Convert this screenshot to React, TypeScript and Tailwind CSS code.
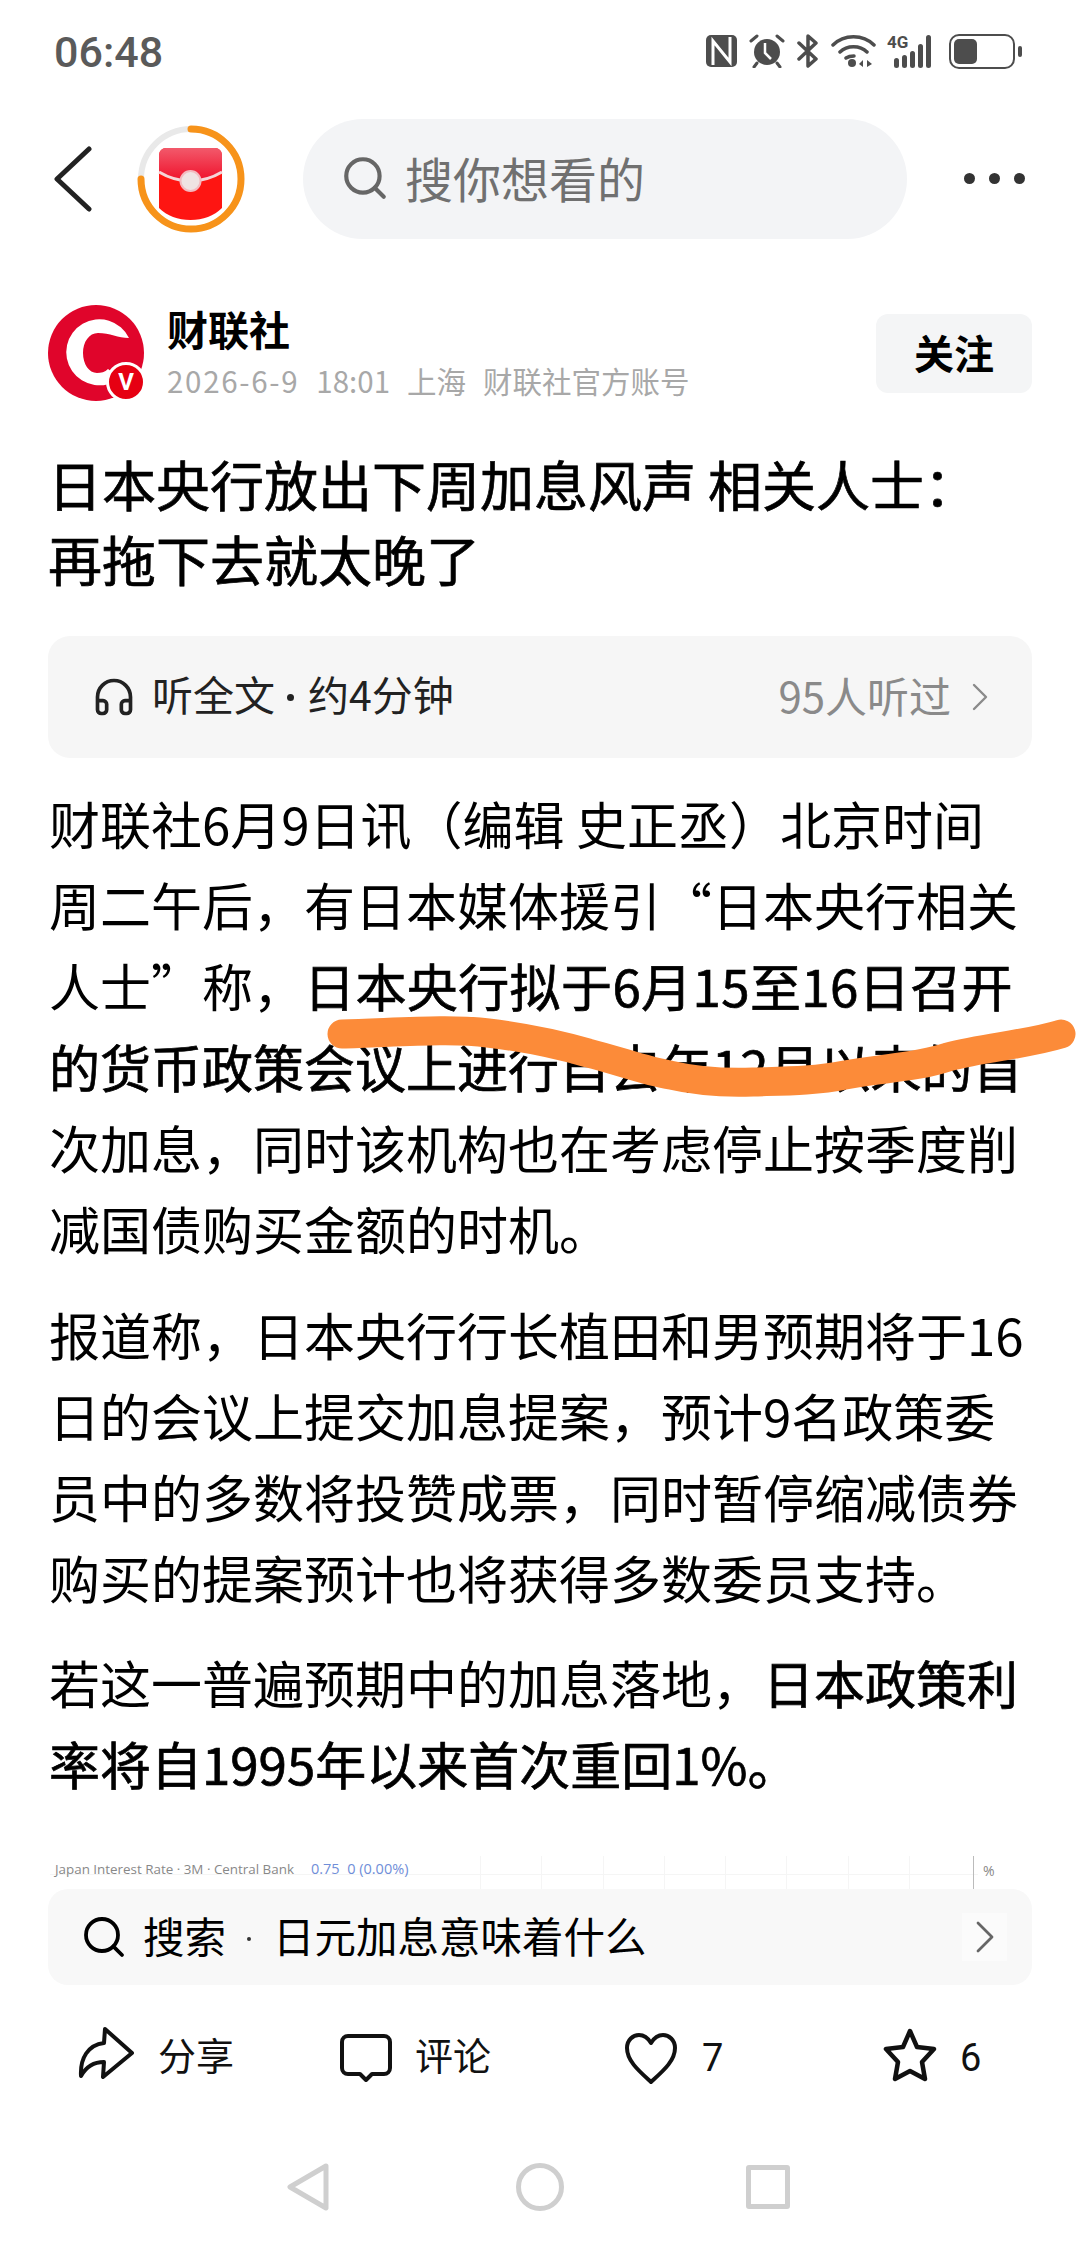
import { ChevronRight, Headphones, Search } from "lucide-react";

const cjk = "font-['Noto_Sans_CJK_SC','Roboto',sans-serif]";
const semi = "[-webkit-text-stroke:0.7px_#000]";

function StatusIcons() {
  return (
    <div className="flex items-center text-[#4d4d4d]">
      {/* nfc */}
      <svg width="31" height="32" viewBox="0 0 31 32">
        <rect x="0" y="0" width="31" height="32" rx="5" fill="#4d4d4d" />
        <path d="M7 30V6l17 21V2" fill="none" stroke="#fff" strokeWidth="3" />
      </svg>
      {/* alarm */}
      <svg width="36" height="34" viewBox="0 0 36 34" className="ml-[12px]">
        <circle cx="18" cy="18" r="13" fill="#4d4d4d" />
        <path d="M16 9v10l6 6" fill="none" stroke="#fff" strokeWidth="2.5" />
        <path d="M2 7l6-5M34 7l-6-5M8 29l-3 4M28 29l3 4" stroke="#4d4d4d" strokeWidth="3" strokeLinecap="round" />
      </svg>
      {/* bluetooth */}
      <svg width="22" height="34" viewBox="0 0 22 34" className="ml-[12px]">
        <path d="M2 9l17 16-8 7V2l8 7L2 25" fill="none" stroke="#4d4d4d" strokeWidth="3.5" strokeLinejoin="round" strokeLinecap="round" />
      </svg>
      {/* wifi */}
      <svg width="45" height="34" viewBox="0 0 45 34" className="ml-[12px]">
        <path d="M2 11c11-11 30-11 41 0M9 18c7-7 20-7 27 0M15 24c3-2 6-2 8-2" fill="none" stroke="#4d4d4d" strokeWidth="3.5" strokeLinecap="round" />
        <circle cx="21" cy="29" r="4" fill="#4d4d4d" />
        <path d="M28 30l4-4v7zM36 26v7l5-3z" fill="#4d4d4d" />
      </svg>
      {/* 4g + bars */}
      <div className="relative ml-[11px] w-[50px] h-[34px]">
        <span className="absolute left-0 top-[-2px] text-[17px] font-bold leading-[20px] font-['Roboto',sans-serif]">4G</span>
        <div className="absolute left-[7px] bottom-0 flex items-end gap-[3px]">
          <div className="w-[5px] h-[10px] rounded-full bg-[#4d4d4d]" />
          <div className="w-[5px] h-[13px] rounded-full bg-[#4d4d4d]" />
          <div className="w-[5px] h-[17px] rounded-full bg-[#4d4d4d]" />
          <div className="w-[5px] h-[24px] rounded-full bg-[#4d4d4d]" />
          <div className="w-[5px] h-[33px] rounded-full bg-[#4d4d4d]" />
        </div>
      </div>
      {/* battery */}
      <div className="flex items-center gap-[3px] ml-[12px]">
        <div className="w-[66px] h-[35px] rounded-[10px] border-[2px] border-[#4d4d4d] p-[3px]">
          <div className="w-[23px] h-full rounded-[5px] bg-[#4d4d4d]" />
        </div>
        <div className="w-[4px] h-[11px] rounded-full bg-[#4d4d4d]" />
      </div>
    </div>
  );
}

function RedPacket() {
  return (
    <svg width="108" height="108" viewBox="0 0 108 108" className="shrink-0">
      <defs>
        <linearGradient id="top" x1="0" y1="0" x2="0" y2="1">
          <stop offset="0" stopColor="#f2596b" />
          <stop offset="1" stopColor="#f0102a" />
        </linearGradient>
      </defs>
      <circle cx="54" cy="54" r="50" fill="none" stroke="#e9e9e9" strokeWidth="6" />
      <path d="M54 4A50 50 0 1 1 4 54" fill="none" stroke="#f7931a" strokeWidth="7" strokeLinecap="round" />
      <path d="M22 30a7 7 0 0 1 7-7h49a7 7 0 0 1 7 7v53c-8 8-19 12-31.500 12S30 91 22 83z" fill="#fe1512" />
      <path d="M22 30a7 7 0 0 1 7-7h49a7 7 0 0 1 7 7v17c-10 6-21 9-31.500 9S32 53 22 47z" fill="url(#top)" />
      <path d="M22 47c10 6 21 9 31.500 9S75 53 85 47" fill="none" stroke="#f5d5d8" strokeWidth="3" />
      <circle cx="53.500" cy="56" r="10" fill="#efe3e3" stroke="#f3b9bf" strokeWidth="2" />
    </svg>
  );
}

function CailianLogo() {
  return (
    <div className="relative w-[96px] h-[96px] shrink-0">
      <svg width="96" height="96" viewBox="0 0 96 96">
        <circle cx="48" cy="48" r="48" fill="#e0052b" />
        <path d="M81 33A33 33 0 1 0 72 73L60 64C57 67 53 68 49 68 41 68 35 59 35 48 35 37 41 28 50 28 62 28 70 33 81 33z" fill="#fff" />
      </svg>
      <div className="absolute right-[-2px] bottom-[-1px] w-[40px] h-[40px] rounded-full bg-[#e60012] border-[3px] border-white flex items-center justify-center text-white text-[24px] font-bold font-['Roboto',sans-serif]">
        V
      </div>
    </div>
  );
}

function Scribble() {
  return (
    <svg className="absolute left-0 top-0 pointer-events-none" width="1080" height="1120" viewBox="0 0 1080 1120">
      <path
        d="M342 1034C390 1033 450 1028 488 1033C530 1038 560 1045 588 1053C620 1061 645 1071 670 1075C700 1082 725 1083 753 1082C785 1081 815 1081 845 1075C880 1068 915 1068 948 1057C985 1047 1025 1045 1061 1034"
        fill="none"
        stroke="#fc8b39"
        strokeWidth="29"
        strokeLinecap="round"
      />
    </svg>
  );
}

function Actions() {
  return (
    <div className="relative mt-[45px] h-[52px] text-[38px] text-[#111]">
      <svg width="56" height="52" viewBox="0 0 56 52" className="absolute left-[78px] top-[-3px]">
        <path d="M27 2L54 26 25 50l1-15C15 35 8 40 3 49 2 31 10 18 26 16z" fill="none" stroke="#111" strokeWidth="4" strokeLinejoin="round" />
      </svg>
      <span className="absolute left-[158px] top-[-2px] leading-[52px]">分享</span>
      <svg width="52" height="48" viewBox="0 0 52 48" className="absolute left-[340px] top-[4px]">
        <path d="M8 2h36a6 6 0 0 1 6 6v26a6 6 0 0 1-6 6H32l-6 6-6-6H8a6 6 0 0 1-6-6V8a6 6 0 0 1 6-6z" fill="none" stroke="#111" strokeWidth="4" strokeLinejoin="round" />
      </svg>
      <span className="absolute left-[415px] top-[-2px] leading-[52px]">评论</span>
      <svg width="52" height="52" viewBox="0 0 52 52" className="absolute left-[625px] top-[3px]">
        <path d="M26 49C14 38 2 28 2 15 2 7 8 2 14 2c5 0 9 3 12 8 3-5 7-8 12-8 6 0 12 5 12 13 0 13-12 23-24 34z" fill="none" stroke="#111" strokeWidth="4" strokeLinejoin="round" />
      </svg>
      <span className="absolute left-[702px] top-[2px] leading-[52px] font-['Roboto',sans-serif]">7</span>
      <svg width="54" height="54" viewBox="0 0 54 54" className="absolute left-[883px] top-[-2px]">
        <path d="M27 3l7 16 17 2-12 13 3 17-15-8-15 8 3-17L3 21l17-2z" fill="none" stroke="#111" strokeWidth="4.500" strokeLinejoin="round" />
      </svg>
      <span className="absolute left-[960px] top-[2px] leading-[52px] font-['Roboto',sans-serif]">6</span>
    </div>
  );
}

export default function App() {
  return (
    <div lang="zh-CN" className={`relative w-[1080px] h-[2244px] bg-white overflow-hidden ${cjk}`}>
      {/* status bar */}
      <div className="h-[102px] pl-[54px] pr-[58px] flex items-center justify-between">
        <span className="text-[43px] leading-none text-[#5a5a5a] font-medium font-['Roboto',sans-serif] pt-[2px]">06:48</span>
        <StatusIcons />
      </div>

      {/* top nav */}
      <div className="mt-[17px] h-[120px] pl-[53px] pr-[55px] flex items-center">
        <svg width="40" height="66" viewBox="0 0 40 66" className="mr-[44px] shrink-0">
          <path d="M36 3L4 33l32 30" fill="none" stroke="#222" strokeWidth="5" strokeLinecap="round" strokeLinejoin="round" />
        </svg>
        <RedPacket />
        <div className="ml-[58px] w-[604px] h-[120px] rounded-[60px] bg-[#f3f4f6] flex items-center pl-[37px] gap-[15px]">
          <Search size={50} strokeWidth={2} className="text-[#666] shrink-0 -mt-[2px]" />
          <span className="text-[48px] text-[#707070] pb-[5px]">搜你想看的</span>
        </div>
        <div className="ml-auto flex gap-[14px] -mt-[2px]">
          <div className="w-[11px] h-[11px] rounded-full bg-[#333]" />
          <div className="w-[11px] h-[11px] rounded-full bg-[#333]" />
          <div className="w-[11px] h-[11px] rounded-full bg-[#333]" />
        </div>
      </div>

      {/* author */}
      <div className="mt-[66px] pl-[48px] pr-[48px] flex items-center">
        <CailianLogo />
        <div className="ml-[23px]">
          <div className="text-[41px] leading-[50px] font-bold text-black -mt-[3px]">财联社</div>
          <div className="mt-[7px] flex gap-[17px] text-[29.500px] leading-[40px] text-[#a8a8a8] whitespace-nowrap">
            <span className="tracking-[1.700px]">2026-6-9</span>
            <span>18:01</span>
            <span>上海</span>
            <span>财联社官方账号</span>
          </div>
        </div>
        <div className="ml-auto w-[156px] h-[79px] rounded-[12px] bg-[#f4f5f6] flex items-center justify-center text-[40px] font-bold text-black pb-[3px]">关注</div>
      </div>

      {/* title */}
      <h1 className={`mt-[45px] px-[48px] text-[54px] leading-[75px] font-normal text-black ${semi}`}>
        日本央行放出下周加息风声 相关人士：
        <br />
        再拖下去就太晚了
      </h1>

      {/* listen bar */}
      <div className="mt-[40px] mx-[48px] h-[122px] rounded-[22px] bg-[#f6f6f6] flex items-center pl-[44px] pr-[28px]">
        <Headphones size={44} strokeWidth={2} className="text-[#222]" />
        <div className="ml-[16px] flex items-center text-[41px] text-[#222] pb-[6px]">
          <span>听全文</span>
          <span className="ml-[12px] mr-[14px] mt-[6px] w-[7px] h-[7px] rounded-full bg-[#222]" />
          <span>约4分钟</span>
        </div>
        <span className="ml-auto text-[42px] text-[#8a8a8a] pb-[6px]">95人听过</span>
        <ChevronRight size={48} strokeWidth={1.2} className="ml-[5px] text-[#8a8a8a]" />
      </div>

      {/* article */}
      <div className="mt-[25px] px-[49px] text-[51px] leading-[81px] text-black whitespace-nowrap">
        <p>
          财联社6月9日讯（编辑 史正丞）北京时间
          <br />
          周二午后，有日本媒体援引“日本央行相关
          <br />
          人士”称，
          <span className={`${semi} tracking-[0.4px]`}>日本央行拟于6月15至16日召开</span>
          <br />
          <span className={semi}>的货币政策会议上进行自去年12月以来的首</span>
          <br />
          次加息，同时该机构也在考虑停止按季度削
          <br />
          减国债购买金额的时机。
        </p>
        <p className="mt-[25px]">
          报道称，日本央行行长植田和男预期将于16
          <br />
          日的会议上提交加息提案，预计9名政策委
          <br />
          员中的多数将投赞成票，同时暂停缩减债券
          <br />
          购买的提案预计也将获得多数委员支持。
        </p>
        <p className="mt-[24px]">
          若这一普遍预期中的加息落地，
          <span className={semi}>日本政策利</span>
          <br />
          <span className={semi}>率将自1995年以来首次重回1%。</span>
        </p>
      </div>

      <Scribble />

      {/* chart sliver peeking above the search card */}
      <div className="absolute left-0 right-0 top-[1856px] h-[33px] overflow-hidden">
        <div className="absolute left-[50px] right-[102px] top-[18px] h-[1px] bg-[#f5f5f5]" />
        <div className="absolute left-[480px] top-0 w-[490px] h-[33px] grid grid-cols-8">
          <div className="border-l border-[#f5f5f5]" />
          <div className="border-l border-[#f5f5f5]" />
          <div className="border-l border-[#f5f5f5]" />
          <div className="border-l border-[#f5f5f5]" />
          <div className="border-l border-[#f5f5f5]" />
          <div className="border-l border-[#f5f5f5]" />
          <div className="border-l border-[#f5f5f5]" />
          <div className="border-l border-[#f5f5f5]" />
        </div>
        <div className="relative flex items-center h-[26px] pl-[55px] text-[13.400px] text-[#888] whitespace-nowrap font-['Open_Sans',sans-serif]">
          Japan Interest Rate · 3M · Central Bank
          <span className="ml-[17px] text-[14.500px] text-[#6f8ed8]">0.75&nbsp;&nbsp;0 (0.00%)</span>
        </div>
        <div className="absolute left-[973px] top-0 w-[1px] h-[33px] bg-[#bbb]" />
        <span className="absolute left-[983px] top-[4px] text-[14px] text-[#888] font-['Open_Sans',sans-serif]">%</span>
      </div>

      {/* bottom search + actions */}
      <div className="absolute left-0 right-0 top-[1889px]">
        <div className="mx-[48px] h-[96px] rounded-[20px] bg-[#f8f8f8] flex items-center pl-[32px] pr-[25px]">
          <Search size={48} strokeWidth={1.9} className="text-black shrink-0" />
          <div className="ml-[15px] flex items-center text-[41.500px] text-black pb-[3px]">
            <span>搜索</span>
            <span className="ml-[21px] mr-[22px] mt-[6px] w-[4px] h-[4px] rounded-full bg-[#333]" />
            <span>日元加息意味着什么</span>
          </div>
          <div className="ml-auto w-[45px] h-[48px] bg-[#fbfbfb] flex items-center justify-center">
            <ChevronRight size={56} strokeWidth={1.2} className="text-[#666] shrink-0" />
          </div>
        </div>
        <Actions />
      </div>

      {/* nav bar */}
      <div className="absolute left-[287px] top-[2163px] flex items-center">
        <svg width="42" height="48" viewBox="0 0 42 48">
          <path d="M39 3L3 24l36 21z" fill="none" stroke="#cfcfcf" strokeWidth="5" strokeLinejoin="round" />
        </svg>
        <div className="ml-[187px] w-[48px] h-[48px] rounded-full border-[5px] border-[#cfcfcf]" />
        <div className="ml-[182px] w-[44px] h-[44px] rounded-[3px] border-[5px] border-[#cfcfcf]" />
      </div>
    </div>
  );
}
